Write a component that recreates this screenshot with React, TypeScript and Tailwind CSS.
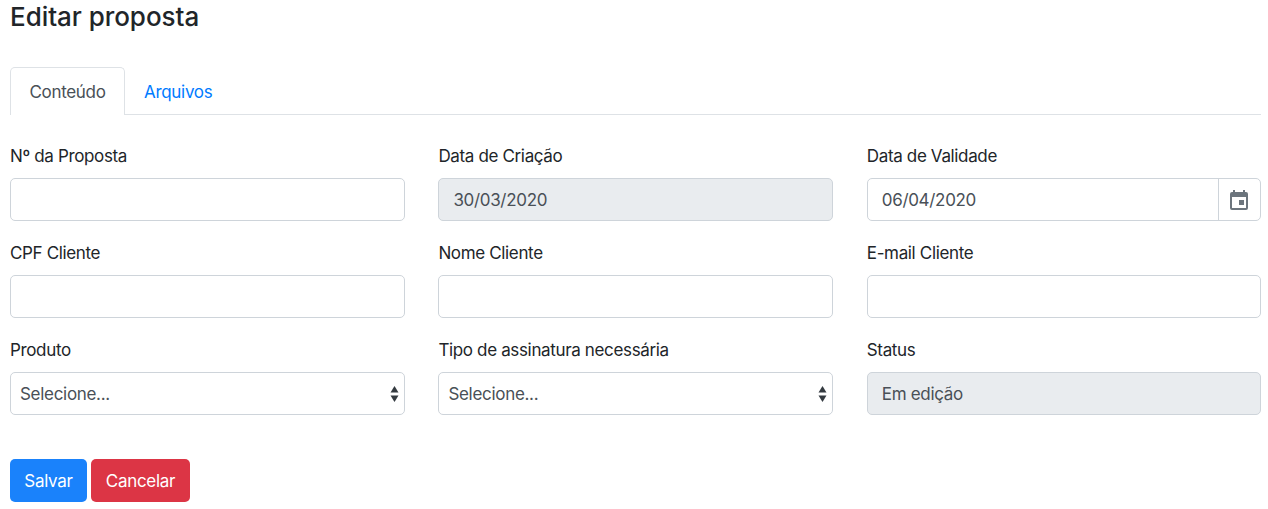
import React from 'react'

const inputClass = 'w-full h-[43px] rounded-[5px] border border-[#ced4da] bg-white px-[15px] text-[17px] text-[#495057]'
const readOnlyClass = 'w-full h-[43px] flex items-center rounded-[5px] border border-[#ced4da] bg-[#e9ecef] px-[14px] pt-[2px] text-[17px] tracking-[-0.32px] text-[#495057]'

function Label({ children }: { children: React.ReactNode }) {
  return <div className="h-[22px] mb-[11px] leading-[22px] text-[17px] tracking-[-0.35px] text-[#212529]">{children}</div>
}

function CalendarIcon() {
  return (
    <svg width="24" height="24" viewBox="0 0 24 24" fill="#6c757d">
      <path d="M19 4h-1V2h-2v2H8V2H6v2H5a2 2 0 0 0-2 2v14a2 2 0 0 0 2 2h14a2 2 0 0 0 2-2V6a2 2 0 0 0-2-2zm0 16H5V9h14v11z" />
      <path d="M12 12h5v5h-5z" />
    </svg>
  )
}

function SelectBox() {
  return (
    <div className="w-full h-[43px] flex items-center justify-between rounded-[5px] border border-[#ced4da] bg-white pl-[9px] pr-[5px] text-[17px] tracking-[-0.3px] text-[#495057]">
      <span className="pt-[2px]">Selecione...</span>
      <svg width="9" height="18" viewBox="0 0 9 18" fill="#343a40">
        <path d="M4.5 1 L8.5 7.5 H0.5 Z" />
        <path d="M4.5 17 L8.5 10.5 H0.5 Z" />
      </svg>
    </div>
  )
}

export default function App() {
  return (
    <div className="h-[509px] bg-white pl-[10px] pr-[7px] overflow-hidden font-['Inter',sans-serif]">
      <h1 className="h-[67px] pt-[2px] text-[26px] leading-[30px] font-medium tracking-[-0.05px] text-[#212529]">Editar proposta</h1>

      <div className="flex h-[48px] border-b border-[#dee2e6]">
        <div className="h-[48px] w-[115px] flex items-center justify-center pt-[2px] rounded-t-[5px] border border-b-0 border-[#dee2e6] bg-white text-[17px] tracking-[-0.3px] text-[#495057]">
          Conteúdo
        </div>
        <div className="h-[47px] pl-[19px] pt-[4px] flex items-center text-[17px] tracking-[-0.3px] text-[#007bff]">Arquivos</div>
      </div>

      <div className="grid grid-cols-[395px_395px_394px] gap-x-[33.4px] gap-y-[21px] mt-[30px]">
        <div>
          <Label>Nº da Proposta</Label>
          <input className={inputClass} />
        </div>
        <div>
          <Label>Data de Criação</Label>
          <div className={readOnlyClass}>30/03/2020</div>
        </div>
        <div>
          <Label>Data de Validade</Label>
          <div className="flex h-[43px] rounded-[5px] border border-[#ced4da] bg-white text-[17px] tracking-[-0.32px] text-[#495057]">
            <div className="flex-1 flex items-center px-[14px] pt-[2px]">06/04/2020</div>
            <div className="w-[42px] flex items-center justify-center border-l border-[#ced4da]">
              <CalendarIcon />
            </div>
          </div>
        </div>

        <div>
          <Label>CPF Cliente</Label>
          <input className={inputClass} />
        </div>
        <div>
          <Label>Nome Cliente</Label>
          <input className={inputClass} />
        </div>
        <div>
          <Label>E-mail Cliente</Label>
          <input className={inputClass} />
        </div>

        <div>
          <Label>Produto</Label>
          <SelectBox />
        </div>
        <div>
          <Label>Tipo de assinatura necessária</Label>
          <SelectBox />
        </div>
        <div>
          <Label>Status</Label>
          <div className={readOnlyClass}>Em edição</div>
        </div>
      </div>

      <div className="flex gap-[4px] mt-[44px]">
        <button className="h-[43px] w-[77px] pt-[2px] rounded-[5px] bg-[#1a82fb] text-[17px] tracking-[-0.3px] text-white">Salvar</button>
        <button className="h-[43px] w-[99px] pt-[2px] rounded-[5px] bg-[#dc3545] text-[17px] tracking-[-0.3px] text-white">Cancelar</button>
      </div>
    </div>
  )
}
